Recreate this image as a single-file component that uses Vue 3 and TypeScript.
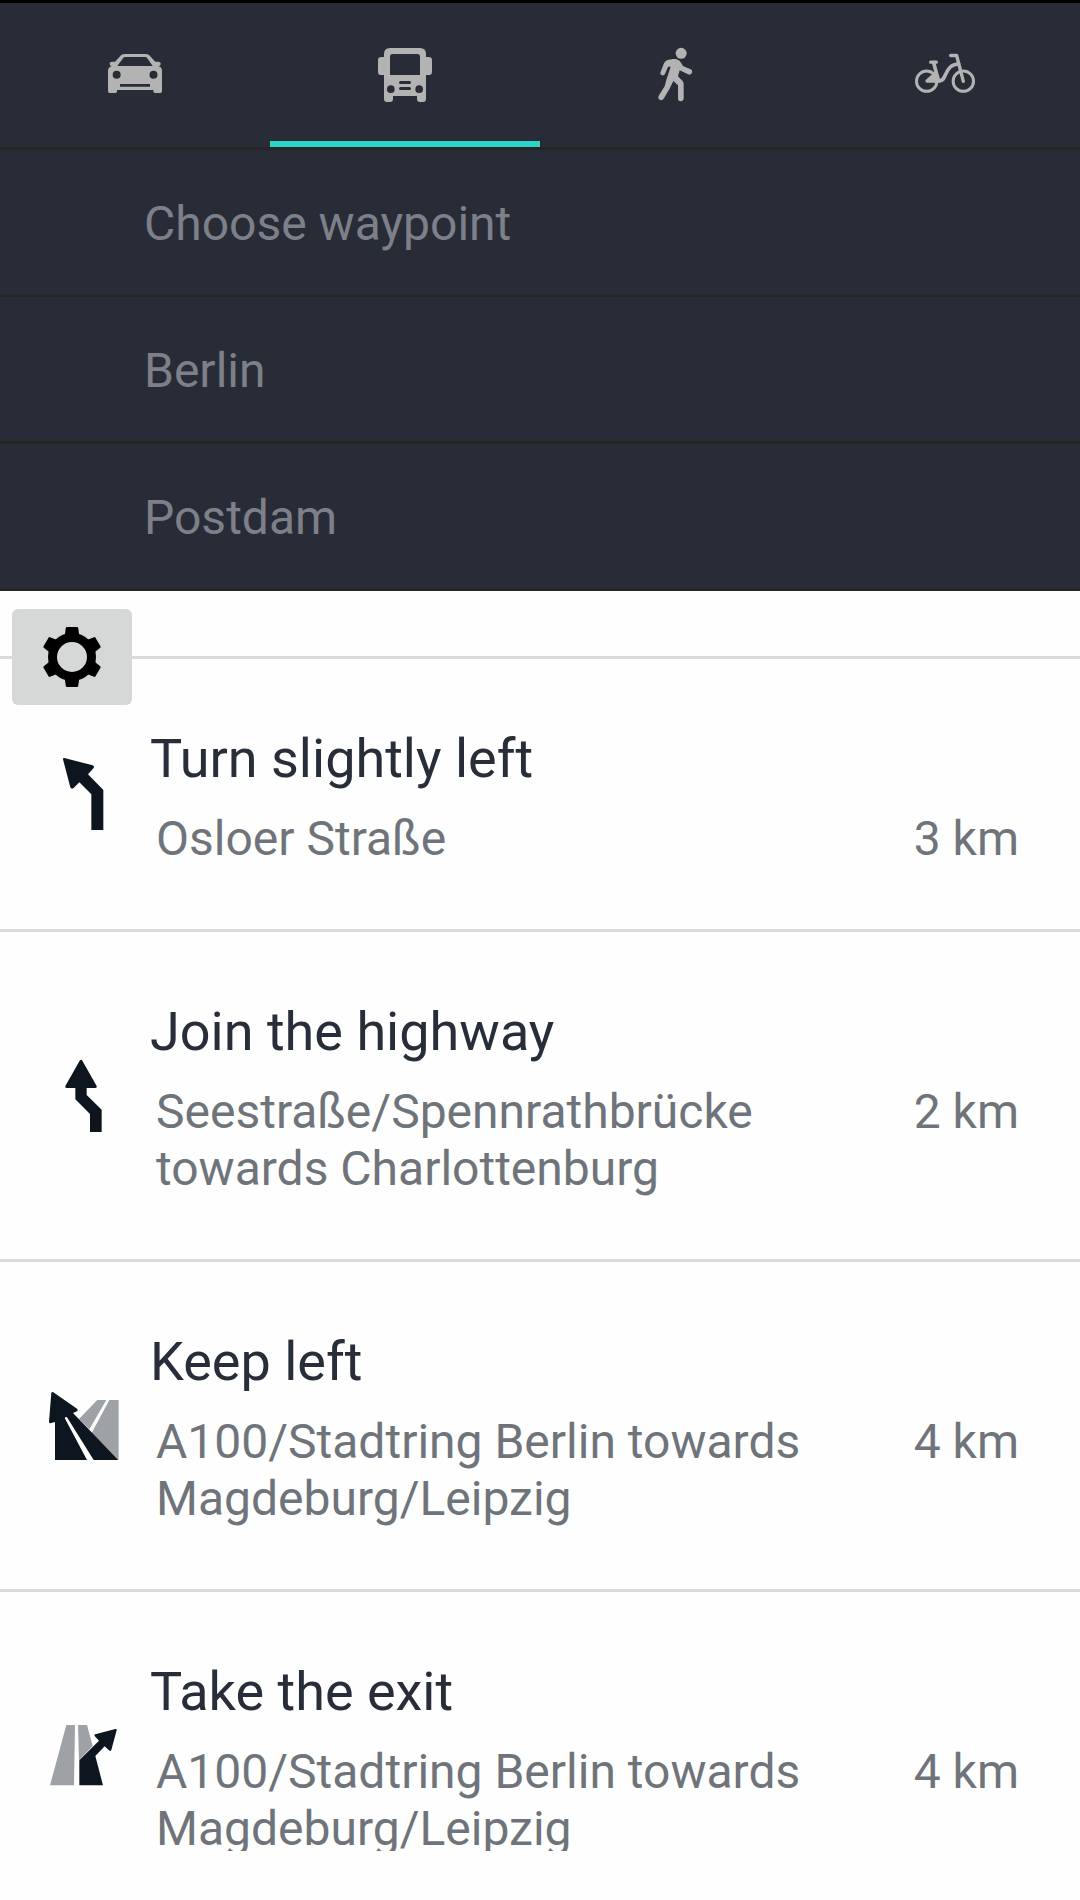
<script setup lang="ts">
type Mode = 'car' | 'bus' | 'walk' | 'bike'
type Maneuver = 'slight-left' | 'join' | 'keep-left' | 'exit-right'

interface Step {
  icon: Maneuver
  title: string
  road: string[]
  distance: string
}

const modes: Mode[] = ['car', 'bus', 'walk', 'bike']
const activeMode: Mode = 'bus'
const waypoints: string[] = ['Choose waypoint', 'Berlin', 'Postdam']

const steps: Step[] = [
  { icon: 'slight-left', title: 'Turn slightly left', road: ['Osloer Straße'], distance: '3 km' },
  { icon: 'join', title: 'Join the highway', road: ['Seestraße/Spennrathbrücke', 'towards Charlottenburg'], distance: '2 km' },
  { icon: 'keep-left', title: 'Keep left', road: ['A100/Stadtring Berlin towards', 'Magdeburg/Leipzig'], distance: '4 km' },
  { icon: 'exit-right', title: 'Take the exit', road: ['A100/Stadtring Berlin towards', 'Magdeburg/Leipzig'], distance: '4 km' },
]

const teeth: number[] = [0, 60, 120, 180, 240, 300]
</script>

<template>
  <div class="screen">
    <header class="planner">
      <nav class="tabs">
        <div v-for="mode in modes" :key="mode" class="tab" :class="{ active: mode === activeMode }">
          <svg v-if="mode === 'car'" class="mode-icon" viewBox="0 0 270 270">
            <path
              fill-rule="evenodd"
              d="M104 72H167C174 72 178 75 182 80L196 95H205C210 95 212 98 212 101C212 105 209 108 205 108C212 110 216 115 216 122V184Q216 189 211 189H195Q190 189 190 184V180H81V184Q81 189 76 189H59Q54 189 54 184V122C54 115 58 110 66 108C62 108 59 105 59 101C59 97 62 95 66 95H75L89 80C93 75 97 72 104 72ZM108 81C103 81 101 82 98 86L82 108H188L173 86C170 82 168 81 163 81ZM80 122.500A12 12 0 1 0 80 146.500A12 12 0 1 0 80 122.500ZM190.500 122.500A12 12 0 1 0 190.500 146.500A12 12 0 1 0 190.500 122.500ZM90 162V170H180V162Z"
            />
          </svg>
          <svg v-else-if="mode === 'bus'" class="mode-icon" viewBox="0 0 270 270">
            <path
              fill-rule="evenodd"
              d="M90 54H180Q198 54 198 72V81H206Q216 81 216 91V125Q216 135 206 135H198V207Q198 216 189 216H180Q171 216 171 207V198H99V207Q99 216 90 216H81Q72 216 72 207V135H64Q54 135 54 125V91Q54 81 64 81H72V72Q72 54 90 54ZM98 72Q90 72 90 80V135H180V80Q180 72 172 72ZM121.500 153A4.500 4.500 0 0 0 121.500 162H148.500A4.500 4.500 0 0 0 148.500 153ZM121.500 171A4.500 4.500 0 0 0 121.500 180H148.500A4.500 4.500 0 0 0 148.500 171ZM92.500 166A11.500 11.500 0 1 0 92.500 189A11.500 11.500 0 1 0 92.500 166ZM177.500 166A11.500 11.500 0 1 0 177.500 189A11.500 11.500 0 1 0 177.500 166Z"
            />
          </svg>
          <svg v-else-if="mode === 'walk'" class="mode-icon" viewBox="0 0 270 270">
            <circle cx="153.500" cy="70" r="16.500" />
            <path
              d="M111 91C119 88 129 86 137 87C144 88 149 92 153 98L159 108L182 118C187 121 188 126 185 130C183 134 179 135 174 133L149 121L144 139L157 152Q161 156 161 162V205C161 210 157 214 152 214C147 214 144 210 144 205V166L130 153L120 173C119 177 117 180 114 184L102 205C99 210 93 212 89 209C84 206 84 201 87 196L104 169L109 150L122 110H114L106 130C104 135 100 137 96 136C91 134 90 130 92 125L102 100Q105 94 111 91Z"
            />
          </svg>
          <svg v-else class="mode-icon" viewBox="0 0 270 270">
            <g fill="none" stroke="#b3b3b3" stroke-linecap="round" stroke-linejoin="round">
              <circle cx="80" cy="153.500" r="30.500" stroke-width="9" />
              <circle cx="190" cy="153.500" r="30.500" stroke-width="9" />
              <path stroke-width="10" d="M92 96.500H109M152 76.500H170L190 154" />
              <path stroke-width="11" d="M101 98L114 148M118 153C138 151 132 128 151 111Q160 103 176 102" />
            </g>
            <path d="M76 153C76 150 79 148 81 146L104 126L117 136L120 158H80Q76 157 76 153Z" />
          </svg>
        </div>
      </nav>
      <div v-for="point in waypoints" :key="point" class="waypoint">{{ point }}</div>
    </header>

    <div class="options">
      <button class="settings" type="button" aria-label="Settings">
        <svg class="gear" viewBox="-30 -30 60 60">
          <circle r="19.500" fill="none" stroke="#000" stroke-width="9" />
          <path
            v-for="angle in teeth"
            :key="angle"
            :transform="`rotate(${angle})`"
            d="M-5 -30H5Q6 -30 6.200 -29L7.500 -20H-7.500L-6.200 -29Q-6 -30 -5 -30Z"
          />
        </svg>
      </button>
    </div>

    <main class="steps">
      <section v-for="step in steps" :key="step.title" class="step" :class="{ tall: step.road.length > 1 }">
        <svg class="maneuver" viewBox="0 0 300 330">
          <path
            v-if="step.icon === 'slight-left'"
            d="M73 54L158 76Q164 79 161 84L144 103L190 150V270H154V163L118 127L100 145Q94 149 91 142L69 58Q69 53 73 54Z"
          />
          <path
            v-else-if="step.icon === 'join'"
            d="M119 62Q123 57 127 62L170 138Q172 144 166 144H140V165L185 209V276H150V222L106 178V144H80Q74 144 76 138Z"
          />
          <template v-else-if="step.icon === 'keep-left'">
            <path class="muted" d="M172 90H199L148 178L117 147ZM208 90H236V270L155 189Z" />
            <path d="M34 68Q36 65 40 67L112 117Q115 121 111 124L99 129L235 270H161L81 142Q77 139 74 144L141 270H45V156L31 160Q27 160 27 155Z" />
          </template>
          <template v-else>
            <path class="muted" d="M79 75H105L102 256H30ZM114 75H141L158 138L117 181Z" />
            <path d="M118 181L177 122L164 108Q162 104 166 103L226 87Q231 86 230 91L214 150Q211 155 207 151L194 139L166 168L189 256H118Z" />
          </template>
        </svg>
        <div class="body">
          <h2 class="title">{{ step.title }}</h2>
          <div class="detail">
            <div class="road">
              <div v-for="line in step.road" :key="line">{{ line }}</div>
            </div>
            <div class="distance">{{ step.distance }}</div>
          </div>
        </div>
      </section>
    </main>
  </div>
</template>

<style>
body {
  background: #fefefe;
}
</style>

<style scoped>
.screen {
  display: flex;
  flex-direction: column;
  box-sizing: border-box;
  width: 1080px;
  height: 1900px;
  padding-bottom: 49px;
  overflow: hidden;
  border-top: 3px solid #000;
  background: #fefefe;
  font-family: Roboto, "Liberation Sans", sans-serif;
}

.planner {
  flex: none;
  background: #282c37;
}

.tabs {
  display: flex;
  height: 144px;
  border-bottom: 3px solid #262626;
}

.tab {
  display: flex;
  flex: 1;
  align-items: center;
  justify-content: center;
}

.tab.active {
  box-shadow: inset 0 -6px #2dd5c9;
}

.mode-icon {
  width: 90px;
  height: 90px;
  fill: #b3b3b3;
}

.waypoint {
  height: 144px;
  padding-left: 144px;
  border-bottom: 3px solid #262626;
  color: #7d8088;
  font-size: 48px;
  line-height: 148px;
}

.options {
  display: flex;
  flex: none;
  box-sizing: border-box;
  height: 68px;
  padding: 18px 12px 0;
  background: linear-gradient(#dbdbdb, #dbdbdb) 0 65px / 100% 3px no-repeat;
}

.settings {
  display: flex;
  flex: none;
  align-items: center;
  justify-content: center;
  width: 120px;
  height: 96px;
  padding: 0;
  border: 0;
  border-radius: 6px;
  background: #d6d8d7;
}

.gear {
  width: 60px;
  height: 60px;
}

.steps {
  flex: 1;
  min-height: 0;
  overflow: hidden;
}

.step {
  display: flex;
  height: 270px;
  padding-left: 40px;
  border-bottom: 3px solid #dbdbdb;
}

.step.tall {
  height: 327px;
}

.maneuver {
  flex: none;
  width: 100px;
  height: 110px;
  margin-top: 81px;
  fill: #0d151f;
}

.tall .maneuver {
  margin-top: 108px;
}

.muted {
  fill: #9ea1a6;
}

.body {
  flex: 1;
  padding: 68px 61px 0 10px;
}

.title {
  margin: 0;
  color: #272e39;
  font-size: 54px;
  font-weight: 400;
  line-height: 64px;
}

.detail {
  display: flex;
  justify-content: space-between;
  padding: 19px 0 0 6px;
  color: #6f747b;
  font-size: 48px;
  line-height: 57px;
}

.road,
.distance {
  white-space: nowrap;
}
</style>
